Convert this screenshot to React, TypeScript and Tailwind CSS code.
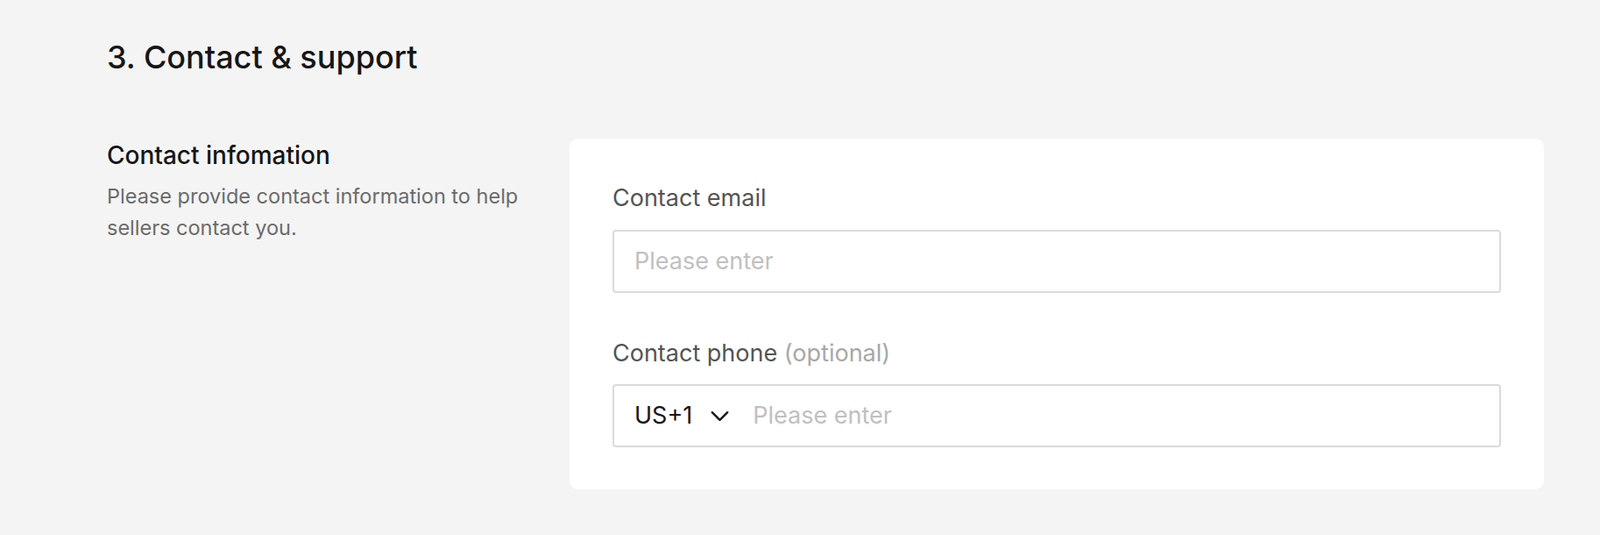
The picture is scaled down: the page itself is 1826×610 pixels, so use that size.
import { ChevronDown } from "lucide-react";

export default function App() {
  return (
    <div className="min-h-[610px] w-full bg-[#f4f4f4] pl-[122px] pr-[64px] font-['Inter',sans-serif]">
      {/* Section heading */}
      <h2 className="pt-[43px] text-[36px] leading-[44px] font-medium text-[#161616]">
        3. Contact &amp; support
      </h2>

      <div className="mt-[71px] flex gap-[48px]">
        {/* Left description */}
        <div className="w-[480px] shrink-0 pt-[2px]">
          <h3 className="text-[28px] leading-[34px] font-medium text-[#161616]">Contact infomation</h3>
          <p className="mt-[12px] text-[23.5px] leading-[36px] text-[#6b6b6b]">
            Please provide contact information to help sellers contact you.
          </p>
        </div>

        {/* Form card */}
        <div className="flex-1 rounded-[10px] bg-white px-[49px] pt-[52px] pb-[48px]">
          <label className="block text-[27px] leading-[32px] text-[#545454]">Contact email</label>
          <div className="mt-[20px] flex h-[72px] items-center rounded-[4px] border-2 border-[#dadada] px-[23px]">
            <input
              className="w-full bg-transparent text-[27px] text-[#161616] outline-none placeholder:text-[#c0c0c0]"
              placeholder="Please enter"
            />
          </div>

          <label className="mt-[53px] block text-[27px] leading-[32px] text-[#545454]">
            Contact phone <span className="text-[#a8a8a8]">(optional)</span>
          </label>
          <div className="mt-[19px] flex h-[72px] items-center rounded-[4px] border-2 border-[#dadada] px-[23px]">
            <button className="flex items-center gap-[14px] text-[27px] text-[#161616]">
              US+1
              <ChevronDown size={35} strokeWidth={1.6} className="text-[#161616]" />
            </button>
            <input
              className="ml-[20px] w-full bg-transparent text-[27px] text-[#161616] outline-none placeholder:text-[#c0c0c0]"
              placeholder="Please enter"
            />
          </div>
        </div>
      </div>
    </div>
  );
}
